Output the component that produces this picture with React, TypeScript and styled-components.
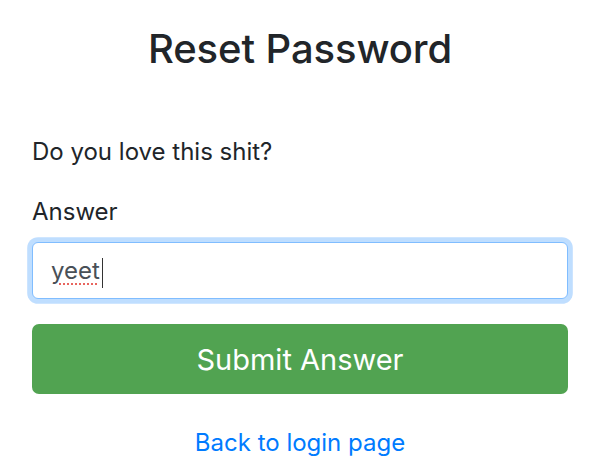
import React from "react";
import styled, { createGlobalStyle } from "styled-components";

const GlobalStyle = createGlobalStyle`
  html, body {
    margin: 0;
    padding: 0;
    background: #ffffff;
  }
  body {
    font-family: Inter, "Liberation Sans", Arial, sans-serif;
    color: #212529;
  }
  * { box-sizing: border-box; }
`;

const Page = styled.main`
  padding: 24px 30px 0 32px;
`;

const Title = styled.h3`
  margin: 0 0 60px;
  font-size: 40px;
  line-height: 50px;
  font-weight: 500;
  letter-spacing: -0.1px;
  text-align: center;
  color: #212529;
`;

const Question = styled.p`
  margin: 0 0 24px;
  font-size: 24px;
  line-height: 36px;
`;

const Label = styled.label`
  display: block;
  margin: 0 0 12px;
  font-size: 24px;
  line-height: 36px;
`;

const FakeInput = styled.div`
  display: flex;
  align-items: center;
  height: 57px;
  padding: 0 18px;
  border: 1.5px solid #80bdff;
  border-radius: 6px;
  box-shadow: 0 0 0 4.8px rgba(0, 123, 255, 0.25);
  font-size: 24px;
  line-height: 36px;
  color: #495057;
  background: #fff;
`;

const Typed = styled.span`
  text-decoration: underline dotted #e8655f;
  text-decoration-thickness: 2px;
  text-underline-offset: 5px;
`;

const Caret = styled.span`
  display: inline-block;
  width: 1.5px;
  height: 30px;
  margin: 4px 0 0 2px;
  background: #333;
`;

const SubmitButton = styled.button`
  display: block;
  width: 100%;
  height: 70px;
  margin-top: 25px;
  border: 0;
  border-radius: 7px;
  background: #51a351;
  color: #fff;
  font-family: inherit;
  font-size: 29px;
  line-height: 45px;
  font-weight: 400;
  cursor: pointer;
`;

const LinkRow = styled.div`
  margin-top: 31px;
  text-align: center;
  font-size: 24px;
  line-height: 36px;
`;

const BackLink = styled.a`
  color: #007bff;
  text-decoration: none;
`;

export default function App() {
  return (
    <>
      <GlobalStyle />
      <Page>
        <Title>Reset Password</Title>
        <Question>Do you love this shit?</Question>
        <Label>Answer</Label>
        <FakeInput>
          <Typed>yeet</Typed>
          <Caret />
        </FakeInput>
        <SubmitButton type="button">Submit Answer</SubmitButton>
        <LinkRow>
          <BackLink href="#">Back to login page</BackLink>
        </LinkRow>
      </Page>
    </>
  );
}
